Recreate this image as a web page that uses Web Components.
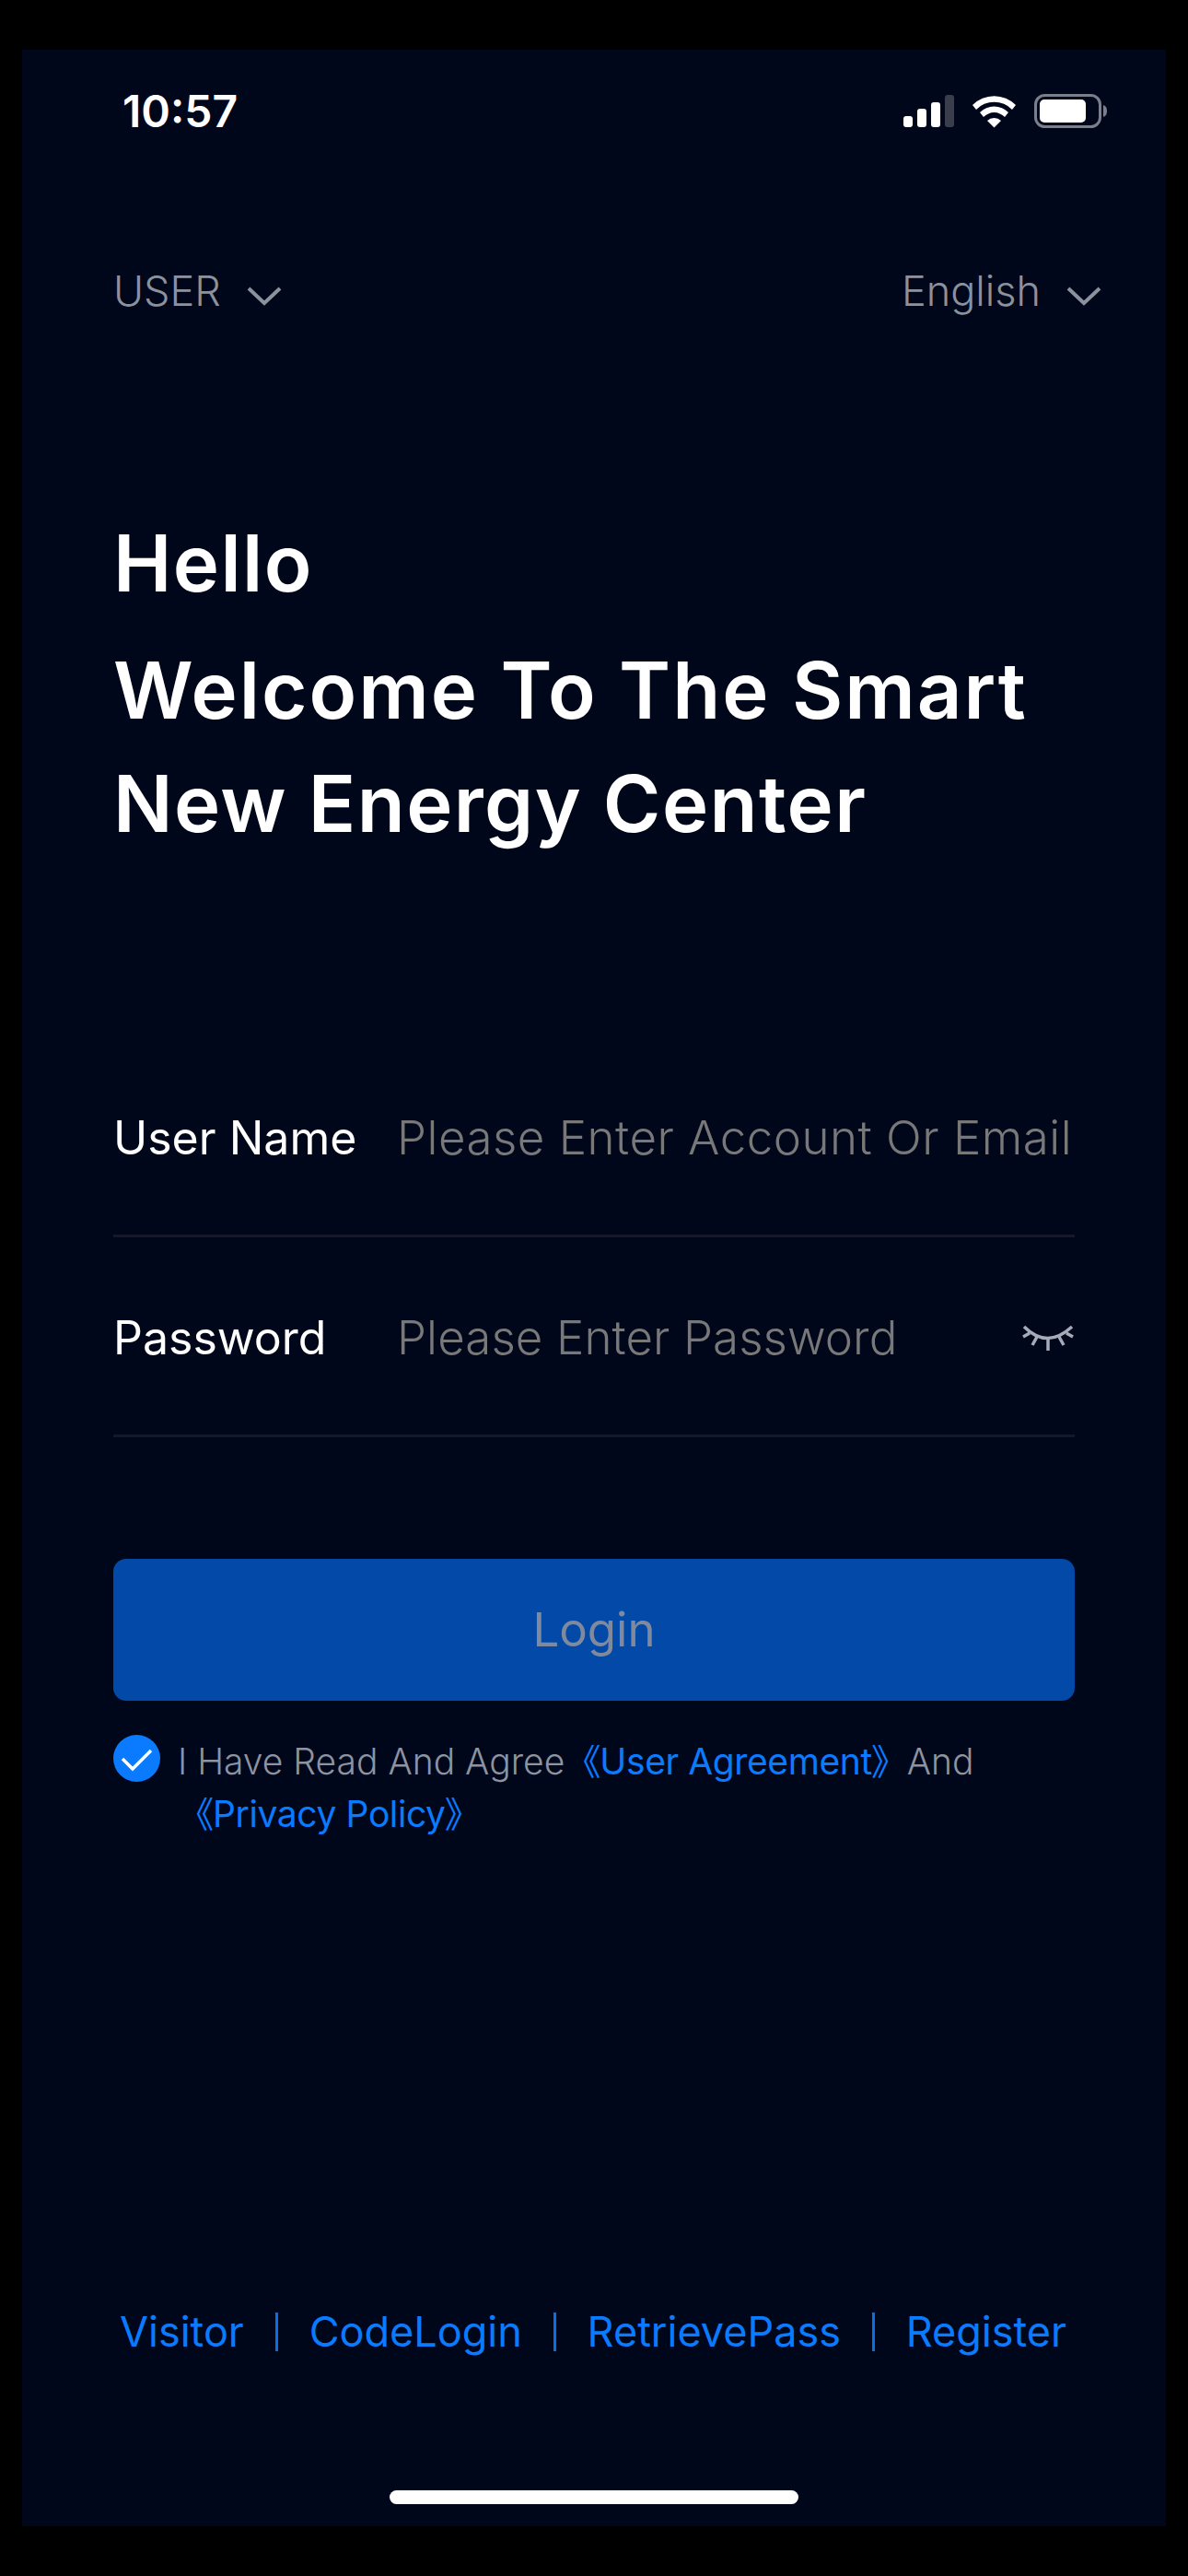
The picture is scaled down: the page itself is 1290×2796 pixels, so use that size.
<!DOCTYPE html>
<html>
<head>
<meta charset="utf-8">
<title>Login</title>
<style>
    html, body { margin: 0; background: #000; }
    body { width: 1290px; height: 2796px; overflow: hidden; font-family: Inter, "Noto Sans CJK SC", sans-serif; }
</style>
</head>
<body>
<app-screen>
    <status-bar time="10:57"></status-bar>
    <top-bar>
        <drop-select slot="left">USER</drop-select>
        <drop-select slot="right">English</drop-select>
    </top-bar>
    <hero-title></hero-title>
    <form-field first label="User Name" placeholder="Please Enter Account Or Email"></form-field>
    <form-field label="Password" placeholder="Please Enter Password" secret></form-field>
    <login-button>Login</login-button>
    <agree-row></agree-row>
    <footer-links></footer-links>
    <home-bar></home-bar>
</app-screen>

<script>
class AppScreen extends HTMLElement {
    constructor() {
        super();
        this.attachShadow({ mode: 'open' });
        this.shadowRoot.innerHTML = `
            <style>
                :host {
                    display: flex;
                    flex-direction: column;
                    box-sizing: border-box;
                    width: 1242px;
                    height: 2688px;
                    margin: 54px 24px;
                    background: #00071b;
                    color: #fff;
                }
            </style>
            <slot></slot>
        `;
    }
}

class StatusBar extends HTMLElement {
    constructor() {
        super();
        this.attachShadow({ mode: 'open' });
    }

    connectedCallback() {
        this.shadowRoot.innerHTML = `
            <style>
                :host {
                    display: flex;
                    justify-content: space-between;
                    align-items: center;
                    height: 36px;
                    margin-top: 49px;
                    padding: 0 64px 0 109px;
                }
                .time {
                    font: 600 48px/36px Inter, sans-serif;
                }
                svg { display: block; }
            </style>
            <span class="time">${this.getAttribute('time')}</span>
            <svg width="221" height="38" viewBox="0 0 221 38">
                <rect x="0" y="24" width="10" height="12" rx="3" fill="#fff"/>
                <rect x="15" y="16" width="10" height="20" rx="3" fill="#fff"/>
                <rect x="30" y="9" width="10" height="27" rx="3" fill="#fff"/>
                <rect x="45" y="1" width="10" height="35" rx="3" fill="#3a3d4b"/>
                <path d="M75 13 A33 33 0 0 1 122 13 L118 18 A27 27 0 0 0 79 18Z" fill="#fff" transform="translate(0 -1)"/>
                <path d="M83 21 A22 22 0 0 1 114 21 L110 26 A16 16 0 0 0 87 26Z" fill="#fff" transform="translate(0 -1)"/>
                <path d="M91 29 A11 11 0 0 1 106 29 L98.5 36.5Z" fill="#fff"/>
                <rect x="143.5" y="1.5" width="70" height="34" rx="10" fill="none" stroke="#7b7e8b" stroke-width="3"/>
                <rect x="148" y="6" width="50" height="25" rx="5" fill="#fff"/>
                <path d="M217 12 C220 13 221 15 221 18.500 C221 22 220 24 217 25Z" fill="#7b7e8b"/>
            </svg>
        `;
    }
}

class TopBar extends HTMLElement {
    constructor() {
        super();
        this.attachShadow({ mode: 'open' });
        this.shadowRoot.innerHTML = `
            <style>
                :host {
                    display: flex;
                    justify-content: space-between;
                    align-items: center;
                    height: 60px;
                    margin-top: 147px;
                    padding: 0 70px 0 99px;
                }
            </style>
            <slot name="left"></slot>
            <slot name="right"></slot>
        `;
    }
}

class DropSelect extends HTMLElement {
    constructor() {
        super();
        this.attachShadow({ mode: 'open' });
        this.shadowRoot.innerHTML = `
            <style>
                :host {
                    display: inline-flex;
                    align-items: center;
                    gap: 28px;
                    color: #8b919d;
                    font: 300 45px/60px Inter, sans-serif;
                }
                svg { display: block; margin-top: 10px; }
            </style>
            <slot></slot>
            <svg width="38" height="22" viewBox="0 0 38 22">
                <path d="M2 3 L19 19 L36 3" fill="none" stroke="#8b919d" stroke-width="4"/>
            </svg>
        `;
    }
}

class HeroTitle extends HTMLElement {
    constructor() {
        super();
        this.attachShadow({ mode: 'open' });
        this.shadowRoot.innerHTML = `
            <style>
                :host {
                    display: block;
                    padding: 0 0 0 99px;
                    font: 600 85px/123px Inter, sans-serif;
                    letter-spacing: 1.4px;
                    color: #fff;
                }
                .hello { margin-top: 204px; margin-bottom: 15px; }
                .wide { letter-spacing: 2px; }
            </style>
            <div class="hello">Hello</div>
            <div class="wide">Welcome To The Smart</div>
            <div>New Energy Center</div>
        `;
    }
}

class FormField extends HTMLElement {
    constructor() {
        super();
        this.attachShadow({ mode: 'open' });
    }

    connectedCallback() {
        const secret = this.hasAttribute('secret');
        const eye = secret ? `
            <svg width="58" height="30" viewBox="0 0 58 30">
                <g fill="none" stroke="#a6abb9" stroke-width="3.500">
                    <path d="M3 2 Q28 27 55 2"/>
                    <path d="M29 15 V28"/>
                    <path d="M17 13 L12 22"/>
                    <path d="M41 13 L46 22"/>
                    <path d="M9 9 L2 13"/>
                    <path d="M49 9 L56 13"/>
                </g>
            </svg>` : '';
        const top = this.hasAttribute('first') ? 'margin-top: 192px;' : '';
        this.shadowRoot.innerHTML = `
            <style>
                :host {
                    display: block;
                    margin: 0 99px;
                    ${top}
                    height: 217px;
                    box-sizing: border-box;
                    border-bottom: 3px solid #141829;
                }
                .row {
                    display: flex;
                    align-items: center;
                    box-sizing: border-box;
                    height: 214px;
                    padding-top: 4px;
                    font: 300 51px/60px Inter, sans-serif;
                }
                .label { width: 308px; color: #fff; font-size: 50px; font-weight: 400; }
                .hint { flex: 1; color: #787878; white-space: nowrap; letter-spacing: ${secret ? '0.1px' : '0.5px'}; }
                svg { display: block; margin-top: 2px; }
            </style>
            <div class="row">
                <span class="label">${this.getAttribute('label')}</span>
                <span class="hint">${this.getAttribute('placeholder')}</span>
                ${eye}
            </div>
        `;
    }
}

class LoginButton extends HTMLElement {
    constructor() {
        super();
        this.attachShadow({ mode: 'open' });
        this.shadowRoot.innerHTML = `
            <style>
                :host {
                    display: flex;
                    align-items: center;
                    justify-content: center;
                    height: 154px;
                    margin: 132px 99px 0;
                    border-radius: 14px;
                    background: #034aa8;
                    color: #7f8a9f;
                    font: 400 51px/60px Inter, sans-serif;
                }
            </style>
            <slot></slot>
        `;
    }
}

class AgreeRow extends HTMLElement {
    constructor() {
        super();
        this.attachShadow({ mode: 'open' });
        this.shadowRoot.innerHTML = `
            <style>
                :host {
                    display: flex;
                    gap: 19px;
                    margin: 37px 99px 0;
                    font: 300 39px/57px Inter, "Noto Sans CJK SC", sans-serif;
                    color: #8d939f;
                }
                svg { display: block; flex: none; }
                a {
                    color: #0a7bff;
                    text-decoration: none;
                    font-weight: 400;
                    letter-spacing: -0.4px;
                    font-feature-settings: "palt";
                    margin: 0 8px;
                }
                .second { margin-left: 19px; }
            </style>
            <svg width="51" height="51" viewBox="0 0 51 51">
                <circle cx="25.500" cy="25.500" r="25.500" fill="#0a7bff"/>
                <path d="M10 26 L21 37 L41 17" fill="none" stroke="#fff" stroke-width="3.500"/>
            </svg>
            <div>I Have Read And Agree <a>《User Agreement》</a> And<br><a class="second">《Privacy Policy》</a></div>
        `;
    }
}

class FooterLinks extends HTMLElement {
    constructor() {
        super();
        this.attachShadow({ mode: 'open' });
        this.shadowRoot.innerHTML = `
            <style>
                :host {
                    display: flex;
                    justify-content: space-between;
                    align-items: center;
                    margin: auto 108px 0 106px;
                    height: 60px;
                    color: #0a7bff;
                    font: 400 45px/60px Inter, sans-serif;
                }
                i { display: block; width: 3px; height: 42px; background: #0a6fe6; }
            </style>
            <span>Visitor</span><i></i>
            <span>CodeLogin</span><i></i>
            <span>RetrievePass</span><i></i>
            <span>Register</span>
        `;
    }
}

class HomeBar extends HTMLElement {
    constructor() {
        super();
        this.attachShadow({ mode: 'open' });
        this.shadowRoot.innerHTML = `
            <style>
                :host {
                    display: block;
                    width: 444px;
                    height: 15px;
                    margin: 142px auto 24px;
                    border-radius: 8px;
                    background: #fff;
                }
            </style>
        `;
    }
}

customElements.define('app-screen', AppScreen);
customElements.define('status-bar', StatusBar);
customElements.define('top-bar', TopBar);
customElements.define('drop-select', DropSelect);
customElements.define('hero-title', HeroTitle);
customElements.define('form-field', FormField);
customElements.define('login-button', LoginButton);
customElements.define('agree-row', AgreeRow);
customElements.define('footer-links', FooterLinks);
customElements.define('home-bar', HomeBar);
</script>
</body>
</html>
